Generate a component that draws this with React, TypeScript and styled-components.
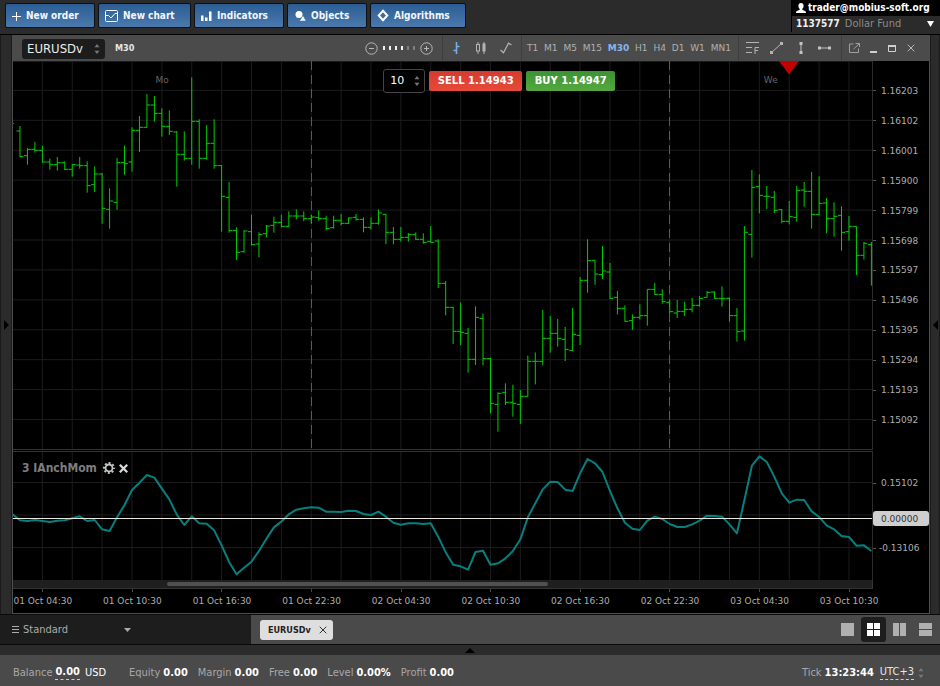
import React from "react";
import styled, { createGlobalStyle, css } from "styled-components";

const GlobalStyle = createGlobalStyle`
  * { box-sizing: border-box; }
  body { margin: 0; background: #2b2b2b; }
  button, input, select { font: inherit; color: inherit; margin: 0; }
  button { border: 0; padding: 0; background: none; cursor: pointer; }
  svg { display: block; }
`;

/* ---------- data ---------- */

const STEP = 7.4685;
const WIDTH = 859;
const PRICE_HEIGHT = 388;
const MOMENTUM_HEIGHT = 128;

type Bar = [high: number, low: number, open: number, close: number];

const sessionOne: Bar[] = [
  [198, 292, 213, 290], [264, 314, 287, 268], [246, 278, 268, 271], [257, 308, 271, 306],
  [296, 329, 306, 314], [291, 332, 314, 308], [304, 330, 308, 328], [312, 350, 328, 314],
  [291, 326, 315, 317], [304, 398, 317, 377], [319, 396, 374, 342], [339, 491, 342, 445],
  [385, 506, 448, 423], [294, 449, 427, 308], [257, 344, 308, 311], [202, 335, 306, 211],
  [168, 276, 211, 202], [102, 203, 202, 135], [108, 185, 135, 160], [145, 230, 160, 199],
  [151, 225, 199, 214], [213, 380, 216, 283], [214, 302, 283, 295], [52, 314, 295, 184],
  [178, 326, 184, 295], [195, 299, 295, 250], [178, 326, 250, 317], [315, 515, 317, 409],
  [366, 518, 412, 511], [502, 600, 511, 577], [511, 578, 575, 513], [464, 556, 515, 554],
  [517, 592, 552, 523], [495, 532, 521, 498], [470, 518, 496, 487], [464, 502, 487, 499],
  [454, 502, 499, 468], [448, 479, 468, 468],
];
const sessionTwo: Bar[] = [
  [94, 124, 108, 116], [104, 130, 116, 111], [91, 122, 113, 116], [107, 151, 116, 146],
  [107, 146, 143, 121], [102, 136, 121, 130], [112, 132, 130, 114], [102, 122, 112, 118],
  [112, 157, 118, 142], [112, 149, 142, 130], [88, 134, 130, 99], [101, 192, 103, 157],
  [141, 193, 157, 178], [141, 185, 178, 172], [159, 185, 172, 163], [157, 180, 163, 178],
  [160, 191, 178, 187], [138, 188, 184, 187], [178, 324, 183, 310], [303, 406, 310, 382],
  [381, 492, 382, 454], [367, 495, 454, 457], [444, 578, 460, 538], [379, 555, 538, 412],
  [400, 556, 415, 536], [533, 700, 536, 670], [637, 755, 673, 640], [610, 675, 637, 667],
  [614, 710, 667, 670], [630, 732, 673, 649], [527, 650, 649, 544], [517, 613, 544, 544],
  [390, 556, 544, 475], [408, 518, 475, 460], [417, 500, 460, 475], [441, 543, 478, 508],
  [384, 513, 511, 463], [291, 495, 466, 301], [178, 338, 301, 242],
];
const sessionThree: Bar[] = [
  [301, 374, 301, 342], [258, 357, 344, 333], [309, 416, 336, 415], [393, 463, 412, 445],
  [436, 485, 445, 484], [463, 510, 482, 472], [433, 479, 472, 467], [388, 497, 467, 388],
  [369, 405, 388, 403], [388, 431, 403, 425], [422, 460, 427, 455], [420, 474, 459, 454],
  [425, 468, 454, 448], [414, 457, 448, 436], [408, 440, 436, 415], [393, 413, 412, 397],
  [394, 416, 396, 415], [379, 440, 415, 415], [412, 485, 415, 467], [444, 545, 467, 515],
  [198, 542, 513, 217], [30, 293, 223, 82], [43, 160, 79, 106], [78, 147, 109, 109],
  [93, 159, 112, 151], [147, 190, 149, 184], [123, 193, 184, 170], [78, 185, 172, 91],
  [66, 140, 90, 94], [36, 206, 94, 163], [49, 166, 163, 130], [114, 220, 129, 176],
  [127, 230, 176, 169], [139, 272, 166, 217], [168, 242, 215, 199], [199, 345, 199, 286],
  [246, 299, 286, 250], [246, 377, 254, 254],
];

/* Each session is stored in thirds of a unit, measured from its own base level. */
const rebase = (bars: Bar[], base: number) =>
  bars.map((bar) => bar.map((v) => base + v / 3) as Bar);

const bars: Bar[] = [
  ...rebase(sessionOne, -1),
  ...rebase(sessionTwo, 119),
  ...rebase(sessionThree, 99),
];

const momentum = [
  223, 241, 243, 240, 243, 246, 242, 241, 235, 229, 243, 240, 268, 273, 232, 195, 150, 128, 105,
  113, 146, 178, 224, 255, 229, 250, 251, 271, 316, 366, 403, 383, 365, 333, 296, 262, 245, 223,
  209, 205, 202, 203, 215, 215, 216, 212, 213, 222, 225, 215, 230, 248, 254, 250, 250, 252, 250,
  290, 337, 374, 379, 389, 336, 332, 374, 370, 355, 333, 298, 232, 190, 148, 125, 126, 149, 153,
  100, 57, 70, 96, 153, 205, 248, 266, 270, 242, 230, 237, 252, 261, 261, 253, 242, 227, 228, 230,
  253, 280, 180, 77, 49, 66, 110, 160, 188, 179, 180, 214, 231, 256, 268, 288, 291, 317, 316, 333,
];

const prices = [
  "1.16203", "1.16102", "1.16001", "1.15900", "1.15799", "1.15698",
  "1.15597", "1.15496", "1.15395", "1.15294", "1.15193", "1.15092",
];
const times = [
  "01 Oct 04:30", "01 Oct 10:30", "01 Oct 16:30", "01 Oct 22:30", "02 Oct 04:30",
  "02 Oct 10:30", "02 Oct 16:30", "02 Oct 22:30", "03 Oct 04:30", "03 Oct 10:30",
];
const timeframes = ["T1", "M1", "M5", "M15", "M30", "H1", "H4", "D1", "W1", "MN1"];

const barX = (i: number) => -0.5 + STEP * i;
const gridX = Array.from({ length: 28 }, (_, k) => barX((k + 1) * 4));
const gridY = prices.map((_, k) => 29.4 + 29.92 * k);

/* ---------- page frame ---------- */

const wide = css`font-family: "DejaVu Sans", Verdana, sans-serif;`;

const Shell = styled.div`
  display: flex;
  flex-direction: column;
  height: 100vh;
  min-height: 480px;
  overflow: hidden;
  background: #2b2b2b;
  color: #fff;
  font: 10px/14px "DejaVu Sans Condensed", "DejaVu Sans", Verdana, sans-serif;
`;

const TopBar = styled.header`
  display: flex;
  justify-content: space-between;
  height: 35px;
  flex: none;
  border-bottom: 1px solid #000;
`;

const Actions = styled.nav`
  display: flex;
  gap: 3px;
  padding: 3px 0 6px 5px;
`;

const ActionButton = styled.button<{ $width: number }>`
  display: flex;
  align-items: center;
  gap: 5px;
  width: ${(p) => p.$width}px;
  padding-left: 6px;
  border: 1px solid #0c0f14;
  border-radius: 2px;
  background: linear-gradient(#2b5d94, #4a79ad);
  color: #f3f6fa;
  font-size: 10px;
  font-weight: bold;
  white-space: nowrap;
`;

const Account = styled.div`
  width: 149px;
  border-left: 1px solid #000;
  height: 32px;
`;

const UserLine = styled.div`
  display: flex;
  align-items: center;
  gap: 2px;
  height: 16px;
  padding-left: 4px;
  background: #000;
  font-weight: bold;
  white-space: nowrap;
  svg { flex: none; }
`;

const FundButton = styled.button`
  display: flex;
  align-items: center;
  gap: 5px;
  width: 100%;
  height: 16px;
  padding: 0 6px 0 4px;
  color: #8a8a8a;
  font-size: 11px;
  b {
    color: #f0f0f0;
    font-size: 10px;
  }
  svg { margin-left: auto; }
`;

const Middle = styled.main`
  display: flex;
  flex: 1;
  min-height: 0;
`;

const Rail = styled.button<{ $width: number }>`
  display: flex;
  align-items: center;
  justify-content: center;
  flex: none;
  width: ${(p) => p.$width}px;
  background: #2b2b2b;
  box-shadow: inset 1px 0 #1a1a1a, inset -1px 0 #1a1a1a;
`;

/* ---------- chart window ---------- */

const ChartWindow = styled.section`
  display: flex;
  flex-direction: column;
  flex: 1;
  min-width: 0;
  border: solid #4d4d4d;
  border-width: 0 1px 1px;
  background: #000;
`;

const WindowBar = styled.div`
  display: flex;
  align-items: center;
  flex: none;
  height: 26px;
  background: #4b4b4b;
  color: #b0b0b0;
`;

const SymbolField = styled.label`
  display: flex;
  align-items: center;
  width: 83px;
  height: 20px;
  margin: 2px 10px 0 9px;
  padding: 0 5px;
  border-radius: 3px;
  background: #1c1c1c;
  color: #ededed;
`;

const SymbolSelect = styled.select`
  appearance: none;
  flex: 1;
  min-width: 0;
  padding: 0;
  border: 0;
  background: none;
  font-size: 13px;
`;

const Period = styled.strong`
  flex: 1;
  color: #e6e6e6;
  font-size: 9px;
`;

const ToolGroup = styled.div<{ $width: number; $line?: boolean }>`
  display: flex;
  align-items: center;
  justify-content: space-between;
  flex: none;
  width: ${(p) => p.$width}px;
  height: 26px;
  ${(p) => p.$line && css`border-left: 1px solid #3f3f3f;`}
`;

const ZoomGroup = styled(ToolGroup)`
  padding: 0 9px;
`;

const ChartTypeGroup = styled(ToolGroup)`
  padding: 0 3px 0 1px;
`;

const TimeframeGroup = styled(ToolGroup)`
  padding: 0 7px 0 5px;
`;

const DrawGroup = styled(ToolGroup)`
  padding: 0 4px 0 1px;
`;

const WindowGroup = styled(ToolGroup)`
  padding: 0 9px 0 3px;
`;

const IconButton = styled.button`
  display: flex;
`;

const ToolButton = styled.button`
  display: flex;
  flex: 1;
  justify-content: center;
`;

const Timeframe = styled.button<{ $active?: boolean }>`
  ${wide}
  color: ${(p) => (p.$active ? "#86b5ea" : "#b0b0b0")};
  font-size: 9px;
  font-weight: ${(p) => (p.$active ? "bold" : "normal")};
`;

const Level = styled.i<{ $on?: boolean }>`
  width: 2px;
  height: 4px;
  margin: 0 1px;
  background: ${(p) => (p.$on ? "#f0f0f0" : "#808080")};
`;

const Levels = styled.span`
  display: flex;
  gap: 2px;
`;

const PaneRow = styled.div<{ $grow?: boolean }>`
  display: flex;
  flex: ${(p) => (p.$grow ? "1" : "none")};
  min-height: 0;
`;

const Plot = styled.div`
  position: relative;
  display: flex;
  flex: 1;
  min-width: 0;
  border-right: 1px solid #2c2c2c;
`;

const PricePlot = styled(Plot)`
  border-bottom: 1px solid #333;
`;

const MomentumPlot = styled(Plot)`
  height: 129px;
  margin-top: 1px;
  border-top: 1px solid #333;
`;

const PlotSvg = styled.svg`
  width: 100%;
  height: 100%;
  path { vector-effect: non-scaling-stroke; fill: none; }
`;

const Axis = styled.div`
  ${wide}
  display: flex;
  flex-direction: column;
  flex: none;
  width: 56px;
  color: #adadad;
  font-size: 9px;
`;

const PriceAxis = styled(Axis)`
  padding: 15px 0 15px;
`;

const AxisLabel = styled.div`
  display: flex;
  align-items: center;
  flex: 1;
  min-height: 0;
  &::before {
    content: "";
    width: 3px;
    height: 1px;
    margin-right: 5px;
    background: #555;
  }
`;

const MomentumAxis = styled(Axis)`
  padding-top: 25px;
`;

const MomentumLabel = styled(AxisLabel)<{ $negative?: boolean }>`
  flex: none;
  height: 16px;
  &::before { margin-right: ${(p) => (p.$negative ? 3 : 5)}px; }
`;

const CurrentValue = styled.div`
  height: 15px;
  margin: 20px 0 14px;
  padding-left: 8px;
  border-radius: 3px;
  background: #cfcfcf;
  color: #333;
  line-height: 16px;
`;

const DayLabel = styled.span<{ $left: number }>`
  ${wide}
  position: absolute;
  top: 12px;
  left: ${(p) => p.$left}%;
  color: #666;
  font-size: 9px;
`;

const Marker = styled.svg`
  position: absolute;
  top: 0;
  left: 89.2%;
`;

const Ticket = styled.form`
  position: absolute;
  top: 8px;
  left: 43.1%;
  display: flex;
  align-items: center;
  gap: 4px;
`;

const LotField = styled.label`
  display: flex;
  align-items: center;
  width: 42px;
  height: 24px;
  padding: 0 4px 0 6px;
  border: 1px solid #444;
  border-radius: 3px;
  background: #000;
`;

const LotInput = styled.input`
  ${wide}
  flex: 1;
  min-width: 0;
  padding: 0;
  border: 0;
  background: none;
  font-size: 11px;
`;

const DealButton = styled.button<{ $side: "sell" | "buy" }>`
  ${wide}
  width: ${(p) => (p.$side === "sell" ? 93 : 89)}px;
  height: 20px;
  border-radius: 2px;
  background: ${(p) =>
    p.$side === "sell" ? "linear-gradient(#d63a30, #e64b38)" : "linear-gradient(#3a9433, #55a83e)"};
  color: #fff;
  font-size: 10px;
  font-weight: bold;
  white-space: nowrap;
`;

const IndicatorTitle = styled.div`
  position: absolute;
  top: 9px;
  left: 9px;
  display: flex;
  align-items: center;
  gap: 4px;
  color: #7d7d7d;
  font-size: 12px;
  font-weight: bold;
  span { margin-right: 2px; }
`;

const Scroller = styled.div`
  height: 9px;
  margin-right: 56px;
  flex: none;
  border: solid #333;
  border-width: 0 1px 1px 0;
  background: #1f1f1f;
`;

const Thumb = styled.div`
  width: 44.4%;
  height: 4px;
  margin: 2px 0 0 17.9%;
  border-radius: 2px;
  background: #505050;
`;

const TimeAxis = styled.div`
  ${wide}
  flex: none;
  height: 24px;
  overflow: hidden;
  color: #adadad;
  font-size: 9px;
`;

const TimeLabels = styled.div`
  display: grid;
  grid-template-columns: repeat(10, 1fr);
  margin: 0 35px 0 -15px;
`;

const TimeLabel = styled.div`
  display: flex;
  flex-direction: column;
  align-items: center;
  white-space: nowrap;
  &::before {
    content: "";
    width: 1px;
    height: 3px;
    margin-bottom: 2px;
    background: #444;
  }
`;

/* ---------- lower bars ---------- */

const TabBar = styled.div`
  display: flex;
  flex: none;
  height: 31px;
  border: solid #0a0a0a;
  border-width: 1px 0;
  background: #4a4a4a;
`;

const LayoutField = styled.label`
  display: flex;
  align-items: center;
  gap: 4px;
  width: 251px;
  padding-left: 12px;
  background: #1d1d1d;
  color: #ababab;
`;

const LayoutSelect = styled.select`
  appearance: none;
  width: 97px;
  padding: 0;
  border: 0;
  background: none;
  font-size: 11px;
`;

const Tabs = styled.div`
  display: flex;
  align-items: center;
  flex: 1;
  padding-left: 9px;
`;

const Tab = styled.div`
  display: flex;
  align-items: center;
  justify-content: space-between;
  width: 73px;
  height: 20px;
  padding: 0 6px 0 8px;
  border-radius: 3px;
  background: #dedede;
  color: #222;
  font-size: 9px;
  font-weight: bold;
`;

const Layouts = styled.div`
  display: flex;
  align-items: center;
  gap: 1px;
  padding-right: 2px;
`;

const LayoutButton = styled.button<{ $active?: boolean }>`
  display: flex;
  align-items: center;
  justify-content: center;
  width: 25px;
  height: 25px;
  border-radius: 3px;
  background: ${(p) => (p.$active ? "#1d1d1d" : "none")};
  color: ${(p) => (p.$active ? "#fff" : "#b0b0b0")};
`;

const Expander = styled.button`
  display: flex;
  align-items: center;
  justify-content: center;
  flex: none;
  height: 10px;
  background: #2b2b2b;
`;

const StatusBar = styled.footer`
  display: flex;
  align-items: center;
  gap: 10px;
  flex: none;
  height: 31px;
  padding: 4px 16px 0 13px;
  background: #4a4a4a;
  color: #a8a8a8;
  font-size: 11px;
  white-space: nowrap;
`;

const Stat = styled.div<{ $wide?: boolean; $end?: boolean }>`
  display: flex;
  align-items: center;
  gap: 3px;
  ${(p) => p.$wide && css`margin-right: 13px;`}
  ${(p) => p.$end && css`margin-left: auto;`}
  b { color: #fff; }
`;

const Dashed = styled.b`
  border-bottom: 1px dashed #ccc;
`;

const Unit = styled.span`
  margin-left: 2px;
  color: #fff;
`;

const ZoneButton = styled.button`
  display: flex;
  align-items: center;
  gap: 4px;
  margin-left: 3px;
  color: #e6e6e6;
  span { border-bottom: 1px dashed #ccc; }
`;

/* ---------- drawings ---------- */

const Spinner = ({ color = "#777" }: { color?: string }) => (
  <svg width="6" height="10" viewBox="0 0 6 10" fill={color} aria-hidden="true">
    <path d="M3 0 5.500 3.200H.5ZM3 10 .5 6.800h5Z" />
  </svg>
);

const PlusIcon = () => (
  <svg width="9" height="10" viewBox="0 0 9 10" stroke="#fff" aria-hidden="true">
    <path d="M4.500 1v9M0 5.500h9" />
  </svg>
);

const NewChartIcon = () => (
  <svg width="13" height="12" viewBox="0 0 13 12" fill="none" stroke="#fff" aria-hidden="true">
    <rect x=".5" y=".5" width="12" height="11" rx="1" />
    <path d="M1 5.500h2.500L6 8l4-4.500h2" />
  </svg>
);

const IndicatorIcon = () => (
  <svg width="11" height="10" viewBox="0 0 11 10" fill="#fff" aria-hidden="true">
    <path d="M0 4.500h2.500V10H0ZM4 6.500h2.500V10H4ZM8 .5h2.500V10H8Z" />
  </svg>
);

const ObjectsIcon = () => (
  <svg width="12" height="11" viewBox="0 0 12 11" fill="#fff" aria-hidden="true">
    <circle cx="5" cy="4.500" r="3.500" />
    <path d="M9 5.500 12 11H5.500Z" stroke="#3d6da2" strokeWidth=".5" />
  </svg>
);

const AlgorithmIcon = () => (
  <svg width="12" height="13" viewBox="0 0 12 13" fill="none" stroke="#fff" strokeWidth="2" aria-hidden="true">
    <path d="M6 1.800 10.300 6.500 6 11.200 1.700 6.500Z" />
  </svg>
);

const UserIcon = () => (
  <svg width="10" height="11" viewBox="0 0 10 11" fill="#fff" aria-hidden="true">
    <path d="M5 0c1.700 0 2.600 1.200 2.600 2.800 0 1.500-.6 2.600-1.300 3.100v.8L9 8c.7.400 1 1 1 2H0c0-1 .3-1.600 1-2l2.700-1.300v-.8C3 5.400 2.400 4.300 2.400 2.800 2.400 1.200 3.300 0 5 0Z" />
  </svg>
);

const CircleSign = ({ plus }: { plus?: boolean }) => (
  <svg width="13" height="13" viewBox="0 0 13 13" fill="none" stroke="#b8b8b8" aria-hidden="true">
    <circle cx="6.500" cy="6.500" r="5.700" />
    <path d={plus ? "M4 6.500h5M6.500 4v5" : "M4 6.500h5"} />
  </svg>
);

const BarsIcon = () => (
  <svg width="7" height="12" viewBox="0 0 7 12" fill="none" stroke="#78aee6" aria-hidden="true">
    <path d="M3.500 0v12" strokeWidth="1.600" />
    <path d="M.5 8.500h3M3.500 4.500h3" strokeWidth="1.300" />
  </svg>
);

const CandlesIcon = () => (
  <svg width="10" height="12" viewBox="0 0 10 12" fill="none" stroke="#b4b4b4" aria-hidden="true">
    <path d="M2 0v2.500M2 9v3M8 0v12" />
    <rect x=".5" y="2.500" width="3" height="6.500" />
    <rect x="7" y="2" width="2" height="7" fill="#b4b4b4" />
  </svg>
);

const LineIcon = () => (
  <svg width="12" height="12" viewBox="0 0 12 12" fill="none" stroke="#b4b4b4" strokeWidth="1.200" aria-hidden="true">
    <path d="M.5 8 3.500 10.800 8.500 1.200 11.500 3" />
  </svg>
);

const FiboIcon = () => (
  <svg width="13" height="12" viewBox="0 0 13 12" fill="none" stroke="#b4b4b4" aria-hidden="true">
    <path d="M0 .5h13M0 5.500h6M0 10.500h6M9 12V5.500h4M9 8.500h3" />
  </svg>
);

const TrendIcon = () => (
  <svg width="13" height="12" viewBox="0 0 13 12" fill="#b4b4b4" stroke="#b4b4b4" aria-hidden="true">
    <path d="M1.500 10.500 11.500 1.500" />
    <path d="M0 9h3v3H0ZM10 0h3v3h-3Z" stroke="none" />
  </svg>
);

const VerticalIcon = () => (
  <svg width="4" height="12" viewBox="0 0 4 12" fill="#c4c4c4" aria-hidden="true">
    <path d="M.5 0h3v3h-3ZM.5 9h3v3h-3ZM1.500 2h1v8h-1Z" />
  </svg>
);

const HorizontalIcon = () => (
  <svg width="13" height="4" viewBox="0 0 13 4" fill="#c4c4c4" aria-hidden="true">
    <path d="M0 .5h3v3H0ZM10 .5h3v3h-3ZM2 1.500h9v1H2Z" />
  </svg>
);

const DetachIcon = () => (
  <svg width="11" height="10" viewBox="0 0 11 10" fill="none" stroke="#a0a0a0" aria-hidden="true">
    <path d="M4.500 1H.500v8.500h9V5.500M6.500.500h4v3.500M10.500.500 4.500 6" />
  </svg>
);

const MinimizeIcon = () => (
  <svg width="7" height="9" viewBox="0 0 7 9" fill="#d0d0d0" aria-hidden="true">
    <path d="M0 7h7v2H0Z" />
  </svg>
);

const MaximizeIcon = () => (
  <svg width="8" height="7" viewBox="0 0 8 7" fill="none" stroke="#d0d0d0" aria-hidden="true">
    <path d="M.5 1v5.500h7V1" />
    <path d="M0 1h8" strokeWidth="2" />
  </svg>
);

const CrossIcon = ({ size, color, weight = 1 }: { size: number; color: string; weight?: number }) => (
  <svg width={size} height={size} viewBox="0 0 8 8" fill="none" stroke={color} strokeWidth={weight} aria-hidden="true">
    <path d="M.7.700l6.600 6.600M7.300.700.700 7.300" />
  </svg>
);

const GearIcon = () => (
  <svg width="12" height="12" viewBox="0 0 12 12" fill="none" stroke="#c4c4c4" aria-hidden="true">
    <circle cx="6" cy="6" r="3.500" strokeWidth="1.800" />
    <circle cx="6" cy="6" r="5" strokeWidth="2" strokeDasharray="1.960 1.960" strokeDashoffset="1" />
  </svg>
);

const Caret = ({ d, w, h, color }: { d: string; w: number; h: number; color: string }) => (
  <svg width={w} height={h} viewBox={`0 0 ${w} ${h}`} fill={color} aria-hidden="true">
    <path d={d} />
  </svg>
);

const MenuIcon = () => (
  <svg width="7" height="8" viewBox="0 0 7 8" stroke="#ababab" aria-hidden="true">
    <path d="M0 .5h7M0 3.500h7M0 6.500h7" />
  </svg>
);

const layoutShapes = [
  { name: "Single chart", d: "M0 0h13v13H0Z" },
  { name: "Grid of charts", d: "M0 0h6v6H0ZM7 0h6v6H7ZM0 7h6v6H0ZM7 7h6v6H7Z" },
  { name: "Columns", d: "M0 0h6v13H0ZM7 0h6v13H7Z" },
  { name: "Rows", d: "M0 0h13v6H0ZM0 7h13v6H0Z" },
];

/* ---------- charts ---------- */

const gridColumns = (height: number) => gridX.map((x) => `M${x} 0V${height}`).join("");
const gridRows = (rows: number[]) => rows.map((y) => `M0 ${y}H${WIDTH}`).join("");

const barPath = bars
  .map(([high, low, open, close], i) => {
    const x = barX(i + 1);
    return `M${x} ${high}V${low}M${x - 3.5} ${open}H${x}M${x} ${close}H${x + 3.5}`;
  })
  .join("");

const PriceChart = () => (
  <PlotSvg viewBox={`0 0 ${WIDTH} ${PRICE_HEIGHT}`} preserveAspectRatio="none" role="img" aria-label="EURUSDv price">
    <path d={gridColumns(PRICE_HEIGHT) + gridRows([0.5, ...gridY])} stroke="#1c1c1c" />
    <path d={`M298.500 0V388M656.500 0V388`} stroke="#5a5a5a" strokeDasharray="9 5" />
    <path d="M0 62.400H1" stroke="#00b400" />
    <path d={barPath} stroke="#00d000" />
  </PlotSvg>
);

const MomentumChart = () => (
  <PlotSvg viewBox={`0 0 ${WIDTH} ${MOMENTUM_HEIGHT}`} preserveAspectRatio="none" role="img" aria-label="Momentum">
    <path d={gridColumns(MOMENTUM_HEIGHT) + gridRows([30.5, 63, 95.5])} stroke="#1c1c1c" />
    <path
      d={"M" + momentum.map((v, i) => `${barX(i)} ${v / 3 - 12}`).join("L")}
      stroke="#077f7f"
      strokeWidth="2"
      strokeLinejoin="round"
    />
    <path d={`M0 66.500H${WIDTH}`} stroke="#e8e8e0" />
  </PlotSvg>
);

/* ---------- app ---------- */

const actions = [
  { label: "New order", width: 90, Icon: PlusIcon },
  { label: "New chart", width: 93, Icon: NewChartIcon },
  { label: "Indicators", width: 90, Icon: IndicatorIcon },
  { label: "Objects", width: 80, Icon: ObjectsIcon },
  { label: "Algorithms", width: 96, Icon: AlgorithmIcon },
];

const stats = [
  ["Equity", "0.00"],
  ["Margin", "0.00"],
  ["Free", "0.00"],
  ["Level", "0.00%"],
  ["Profit", "0.00"],
];

export default function App() {
  return (
    <Shell>
      <GlobalStyle />
      <TopBar>
        <Actions>
          {actions.map(({ label, width, Icon }) => (
            <ActionButton key={label} $width={width}>
              <Icon />
              {label}
            </ActionButton>
          ))}
        </Actions>
        <Account>
          <UserLine>
            <UserIcon />
            trader@mobius-soft.org
          </UserLine>
          <FundButton>
            <b>1137577</b>
            Dollar Fund
            <Caret d="M0 0h7L3.500 6Z" w={7} h={6} color="#fff" />
          </FundButton>
        </Account>
      </TopBar>

      <Middle>
        <Rail $width={12} aria-label="Open left panel">
          <Caret d="M0 0 5 5 0 10Z" w={5} h={10} color="#000" />
        </Rail>
        <ChartWindow>
          <WindowBar>
            <SymbolField>
              <SymbolSelect aria-label="Symbol">
                <option>EURUSDv</option>
              </SymbolSelect>
              <Spinner />
            </SymbolField>
            <Period>M30</Period>
            <ZoomGroup $width={86}>
              <IconButton aria-label="Zoom out"><CircleSign /></IconButton>
              <Levels>
                {[1, 2, 3, 4, 5, 6].map((n) => (
                  <Level key={n} $on={n < 5} />
                ))}
              </Levels>
              <IconButton aria-label="Zoom in"><CircleSign plus /></IconButton>
            </ZoomGroup>
            <ChartTypeGroup $width={79} $line>
              <ToolButton aria-label="Bars"><BarsIcon /></ToolButton>
              <ToolButton aria-label="Candles"><CandlesIcon /></ToolButton>
              <ToolButton aria-label="Line"><LineIcon /></ToolButton>
            </ChartTypeGroup>
            <TimeframeGroup $width={217} $line>
              {timeframes.map((t) => (
                <Timeframe key={t} $active={t === "M30"}>{t}</Timeframe>
              ))}
            </TimeframeGroup>
            <DrawGroup $width={103} $line>
              <ToolButton aria-label="Fibonacci"><FiboIcon /></ToolButton>
              <ToolButton aria-label="Trend line"><TrendIcon /></ToolButton>
              <ToolButton aria-label="Vertical line"><VerticalIcon /></ToolButton>
              <ToolButton aria-label="Horizontal line"><HorizontalIcon /></ToolButton>
            </DrawGroup>
            <WindowGroup $width={88} $line>
              <ToolButton aria-label="Detach"><DetachIcon /></ToolButton>
              <ToolButton aria-label="Minimize"><MinimizeIcon /></ToolButton>
              <ToolButton aria-label="Maximize"><MaximizeIcon /></ToolButton>
              <ToolButton aria-label="Close"><CrossIcon size={8} color="#b8b8b8" /></ToolButton>
            </WindowGroup>
          </WindowBar>

          <PaneRow $grow>
            <PricePlot>
              <PriceChart />
              <DayLabel $left={16.6}>Mo</DayLabel>
              <DayLabel $left={87.4}>We</DayLabel>
              <Marker width="20" height="14" viewBox="0 0 20 14" fill="#c40000" aria-hidden="true">
                <path d="M0 0h20L10 13.500Z" />
              </Marker>
              <Ticket onSubmit={(e) => e.preventDefault()}>
                <LotField>
                  <LotInput aria-label="Volume" defaultValue="10" />
                  <Spinner />
                </LotField>
                <DealButton type="button" $side="sell">SELL 1.14943</DealButton>
                <DealButton type="button" $side="buy">BUY 1.14947</DealButton>
              </Ticket>
            </PricePlot>
            <PriceAxis>
              {prices.map((p) => (
                <AxisLabel key={p}>{p}</AxisLabel>
              ))}
            </PriceAxis>
          </PaneRow>

          <PaneRow>
            <MomentumPlot>
              <MomentumChart />
              <IndicatorTitle>
                <span>3 IAnchMom</span>
                <IconButton aria-label="Settings"><GearIcon /></IconButton>
                <IconButton aria-label="Remove"><CrossIcon size={9} color="#d8d8d8" weight={2} /></IconButton>
              </IndicatorTitle>
            </MomentumPlot>
            <MomentumAxis>
              <MomentumLabel>0.15102</MomentumLabel>
              <CurrentValue>0.00000</CurrentValue>
              <MomentumLabel $negative>-0.13106</MomentumLabel>
            </MomentumAxis>
          </PaneRow>

          <Scroller>
            <Thumb />
          </Scroller>
          <TimeAxis>
            <TimeLabels>
              {times.map((t) => (
                <TimeLabel key={t}>{t}</TimeLabel>
              ))}
            </TimeLabels>
          </TimeAxis>
        </ChartWindow>
        <Rail $width={10} aria-label="Open right panel">
          <Caret d="M5 0 0 5 5 10Z" w={5} h={10} color="#000" />
        </Rail>
      </Middle>

      <TabBar>
        <LayoutField>
          <MenuIcon />
          <LayoutSelect aria-label="Workspace">
            <option>Standard</option>
          </LayoutSelect>
          <Caret d="M0 0h7L3.500 4Z" w={7} h={4} color="#ababab" />
        </LayoutField>
        <Tabs>
          <Tab>
            EURUSDv
            <IconButton aria-label="Close EURUSDv"><CrossIcon size={8} color="#333" /></IconButton>
          </Tab>
        </Tabs>
        <Layouts>
          {layoutShapes.map((shape, i) => (
            <LayoutButton key={shape.name} $active={i === 1} aria-label={shape.name}>
              <svg width="13" height="13" viewBox="0 0 13 13" fill="currentColor" aria-hidden="true">
                <path d={shape.d} />
              </svg>
            </LayoutButton>
          ))}
        </Layouts>
      </TabBar>
      <Expander aria-label="Open lower panel">
        <Caret d="M5 0 10 5H0Z" w={10} h={5} color="#000" />
      </Expander>
      <StatusBar>
        <Stat $wide>
          Balance <Dashed>0.00</Dashed>
          <Unit>USD</Unit>
        </Stat>
        {stats.map(([name, value]) => (
          <Stat key={name}>
            {name} <b>{value}</b>
          </Stat>
        ))}
        <Stat $end>
          Tick <b>13:23:44</b>
          <ZoneButton>
            <span>UTC+3</span>
            <Spinner />
          </ZoneButton>
        </Stat>
      </StatusBar>
    </Shell>
  );
}
